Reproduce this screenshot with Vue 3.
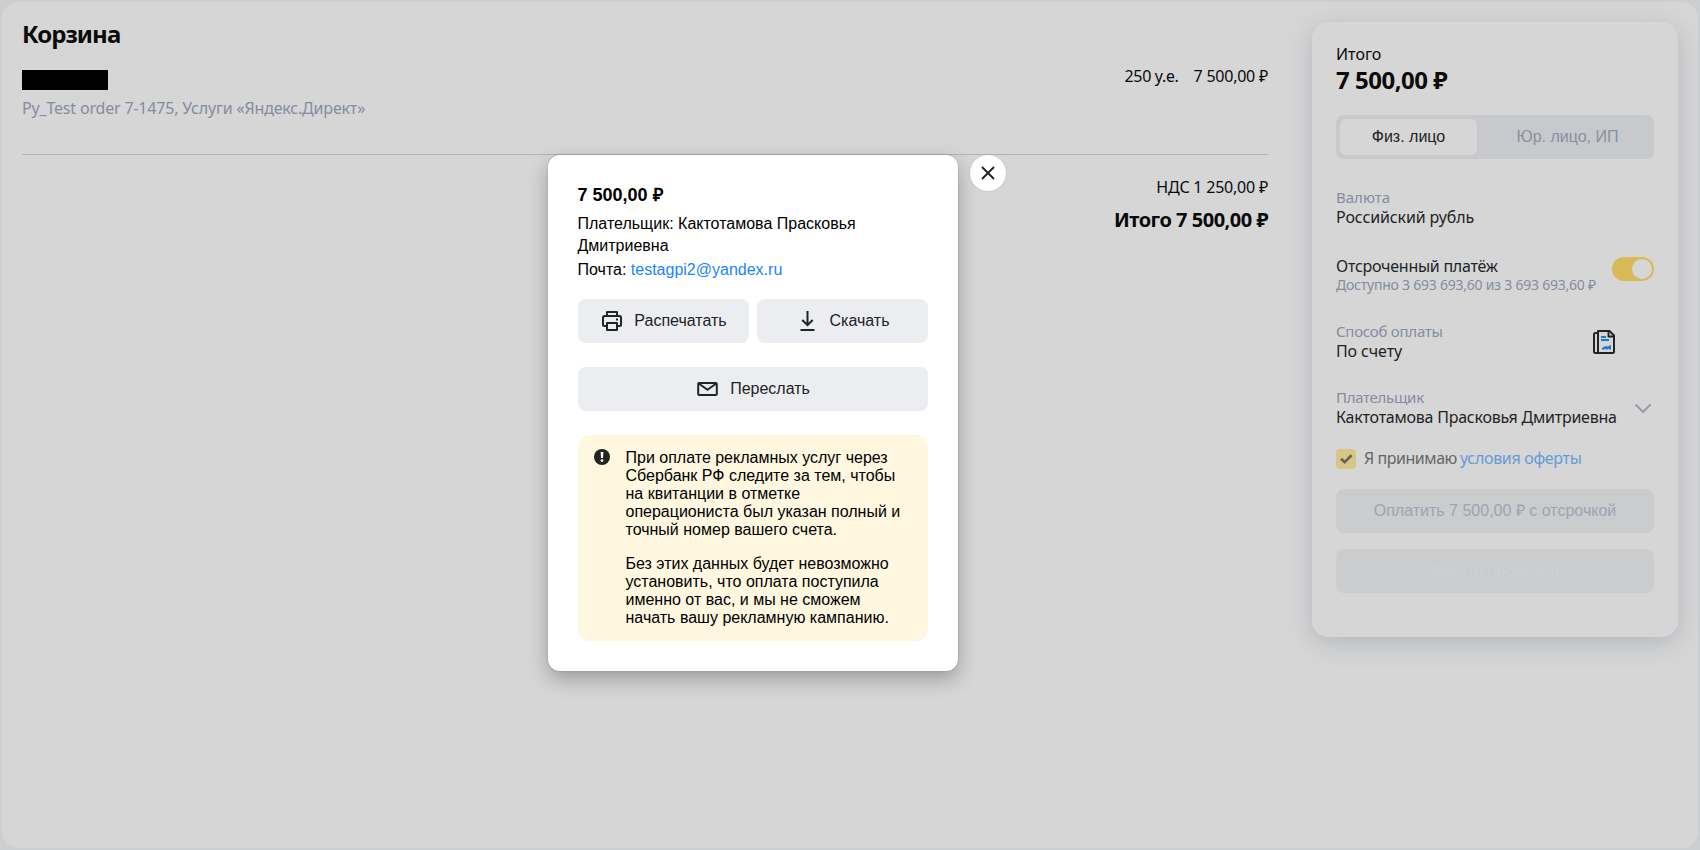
<script setup>
const payer = 'Кактотамова Прасковья Дмитриевна'
const notice = [
  ['При оплате рекламных услуг через', 'Сбербанк РФ следите за тем, чтобы', 'на квитанции в отметке', 'операциониста был указан полный и', 'точный номер вашего счета.'],
  ['Без этих данных будет невозможно', 'установить, что оплата поступила', 'именно от вас, и мы не сможем', 'начать вашу рекламную кампанию.']
]
</script>

<template>
  <div class="screen">
    <div class="page">
      <main class="cart">
        <h1>Корзина</h1>
        <div class="order">
          <div class="order-info">
            <div class="redacted"></div>
            <div class="order-sub">Py_Test order 7-1475, Услуги «Яндекс.Директ»</div>
          </div>
          <div class="order-sum"><span class="units">250 у.е.</span><span class="price">7 500,00 ₽</span></div>
        </div>
        <div class="vat">НДС 1 250,00 ₽</div>
        <div class="sum">Итого 7 500,00 ₽</div>
      </main>

      <aside class="panel">
        <div class="total-label">Итого</div>
        <div class="total">7 500,00 ₽</div>
        <div class="segmented">
          <button class="seg active">Физ. лицо</button>
          <button class="seg">Юр. лицо, ИП</button>
        </div>
        <div class="field currency">
          <div class="label">Валюта</div>
          <div class="value currency-name">Российский рубль</div>
        </div>
        <div class="deferred">
          <div>
            <div class="value def-title">Отсроченный платёж</div>
            <div class="available">Доступно 3 693 693,60 из 3 693 693,60 ₽</div>
          </div>
          <div class="toggle"><i></i></div>
        </div>
        <div class="field method">
          <div>
            <div class="label tight">Способ оплаты</div>
            <div class="value method-name">По счету</div>
          </div>
          <svg class="doc" width="22" height="24" viewBox="0 0 22 24" fill="none">
            <path d="M5 1H16.5L21 5.5V21.5Q21 23 19.5 23H5Z" stroke="#222325" stroke-width="2" stroke-linejoin="round" />
            <path d="M5 3H2.5Q1 3 1 4.5V21.5Q1 23 2.5 23H5" stroke="#222325" stroke-width="2" />
            <path d="M15.5 1.5V6.5H20.5" stroke="#222325" stroke-width="1.8" />
            <path d="M8 7H13M8 10H16" stroke="#1c77d8" stroke-width="2" />
            <path d="M9 19.5V18L13 15.7L14 16.8L18 15V19.5H15.8V18.3L14.6 19.5H12.6V18.4L11 19.5Z" fill="#1c77d8" />
          </svg>
        </div>
        <div class="field payer">
          <div>
            <div class="label payer-label">Плательщик</div>
            <div class="value payer-name">{{ payer }}</div>
          </div>
          <svg class="chevron" width="18" height="11" viewBox="0 0 18 11" fill="none">
            <path d="M1.5 1.5L9 9L16.5 1.5" stroke="#9499a8" stroke-width="1.8" />
          </svg>
        </div>
        <div class="accept">
          <span class="check">
            <svg width="20" height="20" viewBox="0 0 20 20" fill="none"><path d="M5 9.7L8.6 13.2L15.6 6.3" stroke="#666563" stroke-width="2.7" /></svg>
          </span>
          <span class="accept-text">Я принимаю</span>
          <a>условия оферты</a>
        </div>
        <button class="pay">Оплатить 7 500,00 ₽ с отсрочкой</button>
        <button class="pay promo">Ввести промокод</button>
      </aside>
    </div>

    <div class="modal">
      <div class="m-title">7 500,00 ₽</div>
      <div class="m-payer">Плательщик: {{ payer }}</div>
      <div class="m-mail">Почта: <a>testagpi2@yandex.ru</a></div>
      <div class="actions">
        <button class="action">
          <svg width="24" height="24" viewBox="0 0 24 24" fill="none" stroke="#222327" stroke-width="2" stroke-linejoin="round">
            <path d="M7 7V3H17V7" />
            <path d="M7 17H4.5Q3 17 3 15.5V8.5Q3 7 4.5 7H19.5Q21 7 21 8.5V15.5Q21 17 19.5 17H17" />
            <path d="M7 14H17V21H7Z" />
            <path d="M16 10.5H18" />
          </svg>
          <span>Распечатать</span>
        </button>
        <button class="action">
          <svg width="24" height="24" viewBox="0 0 24 24" fill="none" stroke="#222327" stroke-width="2">
            <path d="M11.5 2V16M6.3 11L11.5 16.2L16.7 11M4.5 21H18.5" />
          </svg>
          <span>Скачать</span>
        </button>
      </div>
      <button class="action forward">
        <svg width="24" height="24" viewBox="0 0 24 24" fill="none" stroke="#222327" stroke-width="2" stroke-linejoin="round">
          <rect x="2.2" y="6" width="18.6" height="12" rx="1" />
          <path d="M2.7 6.5L11.5 12.8L20.3 6.5" />
        </svg>
        <span>Переслать</span>
      </button>
      <div class="notice">
        <svg width="16" height="16" viewBox="0 0 16 16">
          <circle cx="8" cy="8" r="8" fill="#222325" />
          <path d="M6.6 3H9.4L9 9H7Z" fill="#fff7df" />
          <circle cx="8" cy="11.6" r="1.4" fill="#fff7df" />
        </svg>
        <div class="notice-text">
          <p v-for="(lines, i) in notice" :key="i"><span v-for="line in lines" :key="line">{{ line }}</span></p>
        </div>
      </div>
      <button class="close" aria-label="Закрыть">
        <svg width="14" height="14" viewBox="0 0 14 14" fill="none"><path d="M1 1L13 13M13 1L1 13" stroke="#222325" stroke-width="1.9" /></svg>
      </button>
    </div>
  </div>
</template>

<style scoped>
* { box-sizing: border-box; }
.screen { position: relative; width: 1700px; height: 850px; padding: 2px; overflow: hidden; background: #cdced0; font: 16px/20px "Noto Sans", sans-serif; color: #0b0b0c; }
button { border: 0; padding: 0; font: 16px/20px "Liberation Sans", Arial, sans-serif; }
.page { display: flex; gap: 44px; align-items: flex-start; height: 846px; padding: 20px; border-radius: 16px; background: #d6d6d6; }
.cart { width: 1246px; }
h1 { margin: 0 0 20px; font-size: 24px; line-height: 24px; font-weight: 700; letter-spacing: -0.95px; }
.order { display: flex; justify-content: space-between; height: 89px; border-bottom: 1px solid #b1b2bf; }
.redacted { width: 86px; height: 20px; margin: 4px 0 8px; background: #000; }
.order-sub { color: #858c9e; letter-spacing: -0.18px; }
.order-sum { display: flex; gap: 15px; }
.units { letter-spacing: -0.3px; }
.price { letter-spacing: -0.24px; }
.vat { margin-top: 22px; text-align: right; letter-spacing: -0.22px; }
.sum { margin-top: 11px; text-align: right; font-size: 20px; line-height: 24px; font-weight: 700; letter-spacing: -0.48px; }

.panel { width: 366px; height: 615px; padding: 22px 24px 0; border-radius: 16px; background: #d6d6d6; box-shadow: 0 6px 24px rgba(90, 100, 125, 0.27); }
.total { margin-top: 2px; font-size: 24px; line-height: 28px; font-weight: 700; letter-spacing: -0.5px; }
.segmented { display: flex; height: 44px; margin-top: 21px; padding: 4px; border-radius: 8px; background: #c8c9cd; }
.seg { flex: 1; padding-left: 8px; background: none; color: #8a90a1; border-radius: 6px; }
.seg.active { flex: 0 0 137px; padding-left: 0; background: #d6d6d6; color: #222325; }
.field { display: flex; color: #222325; }
.currency { display: block; margin-top: 29px; }
.label { font-size: 15px; line-height: 19px; color: #858c9e; }
.tight { letter-spacing: -0.25px; }
.value { color: #222325; }
.currency-name { letter-spacing: -0.12px; }
.method-name { letter-spacing: -0.12px; }
.deferred { display: flex; justify-content: space-between; margin-top: 29px; white-space: nowrap; }
.def-title { letter-spacing: -0.26px; }
.available { font-size: 14px; line-height: 18px; letter-spacing: -0.23px; color: #858c9e; }
.toggle { display: flex; justify-content: flex-end; width: 42px; height: 24px; margin-top: 1px; padding: 2px; border-radius: 12px; background: #d8bb58; }
.toggle i { width: 20px; height: 20px; border-radius: 50%; background: #d6d6d6; }
.method { justify-content: space-between; margin-top: 28px; }
.doc { margin: 8px 39px 0 0; }
.payer { justify-content: space-between; margin-top: 27px; white-space: nowrap; }
.payer-label { letter-spacing: -0.3px; }
.payer-name { letter-spacing: -0.24px; }
.chevron { margin: 15px 2px 0 0; }
.accept { display: flex; margin-top: 21px; white-space: nowrap; }
.check { width: 20px; height: 20px; margin: 1px 8px 0 0; border-radius: 4px; background: #d7c684; }
.check svg { display: block; }
.accept-text { margin-right: 3px; color: #666; letter-spacing: -0.45px; }
.accept a { color: #659bd8; letter-spacing: -0.32px; }
.pay { display: block; width: 318px; height: 44px; margin-top: 20px; border-radius: 8px; background: #cbccce; color: #a0a3af; }
.promo { margin-top: 16px; color: #cfd0d1; }

.modal { position: absolute; left: 548px; top: 155px; width: 410px; height: 516px; padding: 30px; border-radius: 12px; background: #fff; color: #000; font: 16px/22px "Liberation Sans", Arial, sans-serif; box-shadow: 0 8px 20px rgba(0, 0, 0, 0.28), 0 0 2px rgba(0, 0, 0, 0.2); }
.m-title { margin-bottom: 8px; font-size: 18px; line-height: 20px; font-weight: 700; }
.m-title, .m-payer, .m-mail { margin-left: -0.5px; }
.m-mail { margin-top: 2px; }
.m-mail a { color: #1a85ff; }
.actions { display: flex; gap: 8px; margin-top: 18px; }
.action { display: flex; flex: 1; align-items: center; justify-content: center; gap: 10px; height: 44px; border-radius: 8px; background: #ecedf1; color: #222327; }
.forward { width: 350px; margin-top: 24px; }
.notice { display: flex; gap: 16px; margin-top: 24px; height: 206px; padding: 14px 16px; border-radius: 12px; background: #fff7df; line-height: 18px; }
.notice svg { flex: none; }
.notice-text { margin-left: -0.5px; }
.notice p { margin: 0 0 16px; white-space: nowrap; }
.notice span { display: block; }
.close { position: absolute; left: 422px; top: 0; display: grid; place-items: center; width: 36px; height: 36px; border-radius: 50%; background: #fff; box-shadow: 0 0 2px rgba(0, 0, 0, 0.15); }
.close svg { display: block; }
</style>

<style>
body { margin: 0; overflow: hidden; }
</style>
